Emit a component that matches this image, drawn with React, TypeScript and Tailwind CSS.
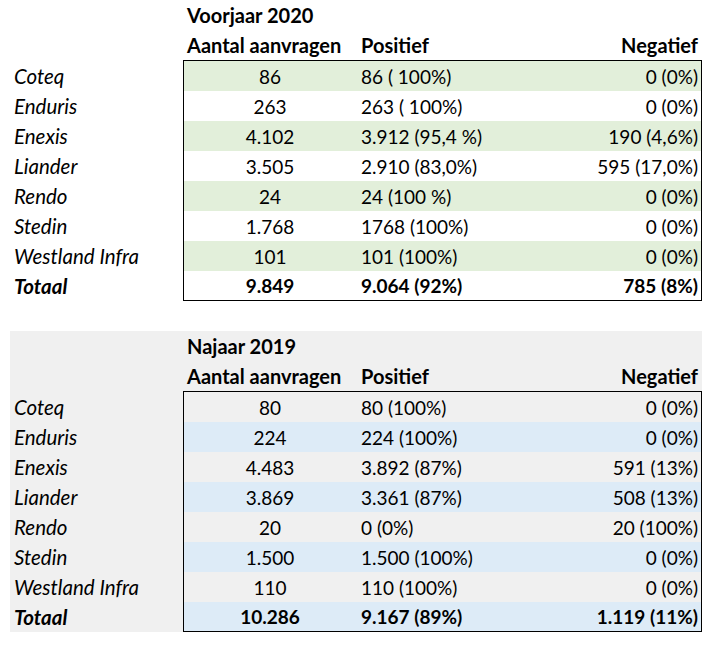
import React from "react";

type Row = { name: string; total: string; pos: string; neg: string };

const voorjaar: Row[] = [
  { name: "Coteq", total: "86", pos: "86 ( 100%)", neg: "0 (0%)" },
  { name: "Enduris", total: "263", pos: "263 ( 100%)", neg: "0 (0%)" },
  { name: "Enexis", total: "4.102", pos: "3.912 (95,4 %)", neg: "190 (4,6%)" },
  { name: "Liander", total: "3.505", pos: "2.910 (83,0%)", neg: "595 (17,0%)" },
  { name: "Rendo", total: "24", pos: "24 (100 %)", neg: "0 (0%)" },
  { name: "Stedin", total: "1.768", pos: "1768 (100%)", neg: "0 (0%)" },
  { name: "Westland Infra", total: "101", pos: "101 (100%)", neg: "0 (0%)" },
];

const najaar: Row[] = [
  { name: "Coteq", total: "80", pos: "80 (100%)", neg: "0 (0%)" },
  { name: "Enduris", total: "224", pos: "224 (100%)", neg: "0 (0%)" },
  { name: "Enexis", total: "4.483", pos: "3.892 (87%)", neg: "591 (13%)" },
  { name: "Liander", total: "3.869", pos: "3.361 (87%)", neg: "508 (13%)" },
  { name: "Rendo", total: "20", pos: "0 (0%)", neg: "20 (100%)" },
  { name: "Stedin", total: "1.500", pos: "1.500 (100%)", neg: "0 (0%)" },
  { name: "Westland Infra", total: "110", pos: "110 (100%)", neg: "0 (0%)" },
];

const Section = ({
  title,
  rows,
  totaal,
  stripe,
  evenFirst,
}: {
  title: string;
  rows: Row[];
  totaal: Row;
  stripe: string;
  evenFirst: boolean;
}) => {
  const all = [...rows, totaal];
  return (
    <div className="w-[702px] flex flex-col">
      {/* title + column headers */}
      <div className="h-[30px] flex items-center pl-[187px] font-bold text-[20px]">{title}</div>
      <div className="h-[30px] flex items-center font-bold text-[20px]">
        <div className="w-[183px]" />
        <div className="w-[173px] pl-[4px]">Aantal aanvragen</div>
        <div className="flex-1 pl-[5px]">Positief</div>
        <div className="pr-[4px]">Negatief</div>
      </div>
      <div className="flex">
        {/* labels */}
        <div className="w-[183px] flex flex-col pt-px">
          {all.map((r, i) => (
            <div
              key={r.name}
              className={`h-[30px] flex items-center pl-[14px] italic text-[20.5px] ${
                i === all.length - 1 ? "font-bold" : ""
              }`}
            >
              {r.name}
            </div>
          ))}
        </div>
        {/* boxed values */}
        <div className="flex-1 border border-black flex flex-col text-[19px]">
          {all.map((r, i) => {
            const striped = evenFirst ? i % 2 === 0 : i % 2 === 1;
            const last = i === all.length - 1;
            return (
              <div
                key={r.name}
                className={`flex items-center ${striped ? stripe : ""} ${
                  last ? "font-bold h-[29px]" : "h-[30px]"
                }`}
              >
                <div className="w-[172px] text-center">{r.total}</div>
                <div className="flex-1 pl-[5px]">{r.pos}</div>
                <div className="pr-[3px] text-right">{r.neg}</div>
              </div>
            );
          })}
        </div>
      </div>
    </div>
  );
};

export default function App() {
  return (
    <div
      className="w-[713px] h-[647px] bg-white text-black leading-none overflow-hidden"
      style={{ fontFamily: "Lato, 'Liberation Sans', sans-serif" }}
    >
      <Section
        title="Voorjaar 2020"
        rows={voorjaar}
        totaal={{ name: "Totaal", total: "9.849", pos: "9.064 (92%)", neg: "785 (8%)" }}
        stripe="bg-[#e2efda]"
        evenFirst={true}
      />
      <div className="h-[30px]" />
      <div className="pl-[10px]">
        <div className="bg-[#f0f0f0] w-[692px]">
          <div className="-ml-[10px]">
            <Section
              title="Najaar 2019"
              rows={najaar}
              totaal={{ name: "Totaal", total: "10.286", pos: "9.167 (89%)", neg: "1.119 (11%)" }}
              stripe="bg-[#ddebf7]"
              evenFirst={false}
            />
          </div>
        </div>
      </div>
    </div>
  );
}
